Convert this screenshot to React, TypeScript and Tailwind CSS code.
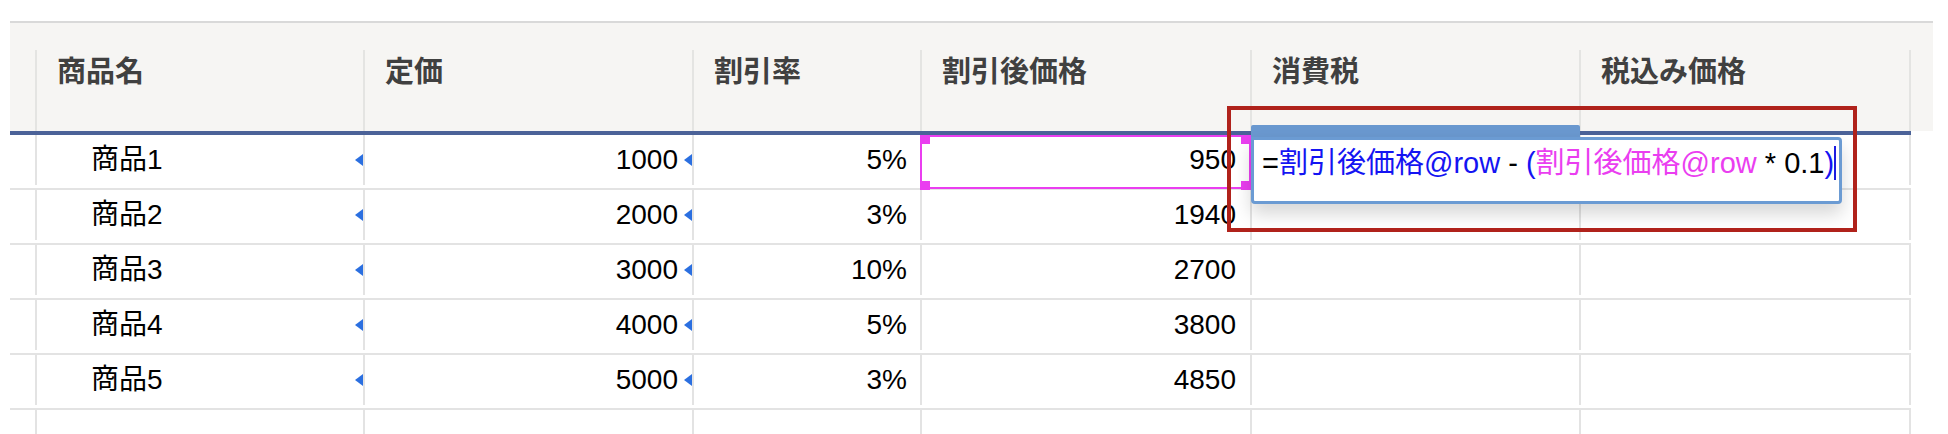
import React from "react";

const font = "font-['Liberation_Sans','Noto_Sans_CJK_JP',sans-serif]";

// widths include the 2px right border of each column
const widths = ["w-[27px]", "w-[328px]", "w-[329px]", "w-[228px]", "w-[330px]", "w-[329px]", "w-[330px]"];
const headers = ["", "商品名", "定価", "割引率", "割引後価格", "消費税", "税込み価格"];

const rows = [
    { name: "商品1", price: "1000", rate: "5%", after: "950" },
    { name: "商品2", price: "2000", rate: "3%", after: "1940" },
    { name: "商品3", price: "3000", rate: "10%", after: "2700" },
    { name: "商品4", price: "4000", rate: "5%", after: "3800" },
    { name: "商品5", price: "5000", rate: "3%", after: "4850" },
    null,
];

const Marker = () => (
    <span className="absolute right-0 top-1/2 -translate-y-1/2 border-y-[6px] border-r-[8px] border-y-transparent border-r-[#2b6fe0]" />
);

const App: React.FC = () => {
    return (
        <div className={`relative h-[434px] w-[1948px] overflow-hidden bg-white pl-[10px] pt-[21px] ${font}`}>
            {/* Header */}
            <div className="flex h-[110px] w-[1923px] border-t-2 border-[#d9d9d9] bg-[#f6f5f3]">
                {headers.map((h, i) => (
                    <div key={i} className={`flex flex-col pt-[27px] ${widths[i]}`}>
                        <div className="flex-1 border-r-2 border-[#e4e4e2] pl-[20px] pt-[5px] text-[29px] leading-[34px] font-bold text-[#404040]">
                            {h}
                        </div>
                    </div>
                ))}
            </div>
            <div className="h-[4px] w-[1901px] bg-[#4b6298]" />

            {/* Body */}
            {rows.map((r, i) => (
                <div key={i} className="flex h-[55px] w-[1901px] border-b-2 border-[#e3e3e3] pb-[3px] text-[28px] leading-[34px] text-black">
                    <div className={`${widths[0]} border-r-2 border-[#e3e3e3]`} />
                    <div className={`${widths[1]} relative flex items-center border-r-2 border-[#e3e3e3] pl-[54px]`}>
                        {r?.name}
                        {r && <Marker />}
                    </div>
                    <div className={`${widths[2]} relative flex items-center justify-end border-r-2 border-[#e3e3e3] pr-[14px]`}>
                        {r?.price}
                        {r && <Marker />}
                    </div>
                    <div className={`${widths[3]} flex items-center justify-end border-r-2 border-[#e3e3e3] pr-[13px]`}>
                        {r?.rate}
                    </div>
                    <div className={`${widths[4]} flex items-center justify-end border-r-2 border-[#e3e3e3] pr-[14px]`}>
                        {r?.after}
                    </div>
                    <div className={`${widths[5]} border-r-2 border-[#e3e3e3]`} />
                    <div className={`${widths[6]} border-r-2 border-[#e3e3e3]`} />
                </div>
            ))}

            {/* Selected cell */}
            <div className="absolute left-[920px] top-[135px] h-[54px] w-[331px] border-2 border-[#ea3ef0]">
                <span className="absolute -left-[2px] -top-[2px] h-[9px] w-[10px] bg-[#ea3ef0]" />
                <span className="absolute -bottom-[3px] -left-[2px] h-[9px] w-[10px] bg-[#ea3ef0]" />
                <span className="absolute -right-[2px] -top-[2px] h-[9px] w-[10px] bg-[#ea3ef0]" />
                <span className="absolute -bottom-[3px] -right-[2px] h-[9px] w-[10px] bg-[#ea3ef0]" />
            </div>

            {/* Formula editor */}
            <div className="absolute left-[1251px] top-[125px]">
                <div className="h-[12px] w-[329px] rounded-t-[2px] bg-[#6a98cf]" />
                <div className="flex h-[67px] w-[591px] items-start rounded-b-[4px] rounded-tr-[4px] border-[3px] border-[#6b9bd3] bg-white pl-[8px] pt-[6px] text-[29px] leading-[35px] shadow-[0_10px_18px_rgba(0,0,0,0.16)]">
                    <span className="text-black">=</span>
                    <span className="text-[#1414f2]">割引後価格@row</span>
                    <span className="whitespace-pre text-black"> - </span>
                    <span className="text-[#1414f2]">(</span>
                    <span className="text-[#ea3ef0]">割引後価格@row</span>
                    <span className="whitespace-pre text-black"> * 0.1</span>
                    <span className="text-[#1414f2]">)</span>
                    <span className="h-[34px] w-[2px] bg-[#1d1de0]" />
                </div>
            </div>

            {/* Annotation */}
            <div className="absolute left-[1227px] top-[106px] h-[126px] w-[630px] border-4 border-[#b0221b]" />
        </div>
    );
};

export default App;
